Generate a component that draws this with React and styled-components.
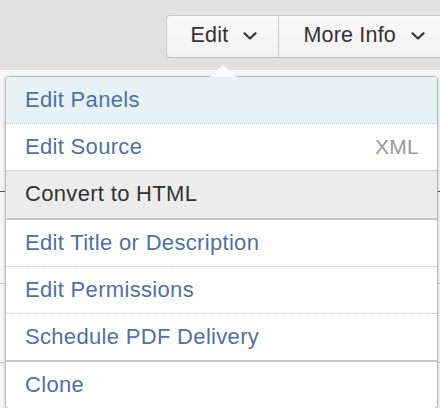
import React from "react";
import styled, { createGlobalStyle } from "styled-components";

const Global = createGlobalStyle`
  html, body { margin: 0; padding: 0; }
  body {
    width: 440px;
    height: 408px;
    overflow: hidden;
    background: #f8f8f8;
    font-family: "Liberation Sans", Helvetica, Arial, sans-serif;
  }
`;

const Page = styled.div`
  position: relative;
  width: 440px;
  height: 408px;
  overflow: hidden;
`;

const Header = styled.div`
  height: 70px;
  background: #e1e1e1;
  display: flex;
  justify-content: flex-end;
  align-items: flex-start;
  padding-top: 15px;
  box-sizing: border-box;
`;

const ButtonGroup = styled.div`
  display: flex;
  margin-right: -7px;
`;

const Button = styled.button`
  display: flex;
  align-items: center;
  gap: 15px;
  height: 43px;
  box-sizing: border-box;
  padding: 0 21px 2px 24px;
  margin: 0;
  background: linear-gradient(#f9f9f9, #f2f2f2);
  border: 1px solid #c9c9c9;
  border-bottom-color: #bdbdbd;
  border-left-width: ${(p) => (p.$first ? "1px" : "0")};
  border-radius: ${(p) => (p.$first ? "4px 0 0 4px" : "0")};
  font-family: inherit;
  font-size: 21.5px;
  letter-spacing: 0.2px;
  color: #333;
  cursor: pointer;
`;

const Chevron = () => (
  <svg width="14" height="8" viewBox="0 0 14 8">
    <polyline
      points="1.5,1.3 7,6.5 12.5,1.3"
      fill="none"
      stroke="#333"
      strokeWidth="2.2"
      strokeLinecap="round"
      strokeLinejoin="round"
    />
  </svg>
);

const Content = styled.div`
  display: flex;
  flex-direction: column;
`;

const TableLine = styled.div`
  height: ${(p) => p.$h}px;
  border-bottom: 1px solid ${(p) => p.$color};
`;

const Menu = styled.div`
  position: absolute;
  left: 5px;
  top: 76px;
  width: 433px;
  box-sizing: border-box;
  background: #fff;
  border: 1px solid #b9b9b9;
  border-radius: 4px;
  box-shadow: 0 1px 5px rgba(0, 0, 0, 0.18);

  &::before {
    content: "";
    position: absolute;
    left: 203px;
    top: -12px;
    border-left: 14px solid transparent;
    border-right: 14px solid transparent;
    border-bottom: 12px solid #f9fcfd;
  }
`;

const Item = styled.div`
  display: flex;
  align-items: center;
  justify-content: space-between;
  height: 46.2px;
  padding: 0 18px 0 19px;
  font-size: 22px;
  letter-spacing: 0.32px;
  color: ${(p) => (p.$plain ? "#333" : "#4f71a6")};
  background: ${(p) =>
    p.$active ? "#e7f2f5" : p.$plain ? "#ececec" : "transparent"};
  border-top: ${(p) =>
    p.$sep === "solid"
      ? "2px solid #c6c6c6"
      : p.$sep === "dotted"
      ? "1px dotted #bdbdbd"
      : "none"};
  border-radius: ${(p) => (p.$active ? "3px 3px 0 0" : "0")};
`;

const Hint = styled.span`
  color: #999;
  font-size: 21px;
  letter-spacing: 0.3px;
`;

const items = [
  { label: "Edit Panels", active: true },
  { label: "Edit Source", hint: "XML", sep: "dotted" },
  { label: "Convert to HTML", plain: true, sep: "dotted" },
  { label: "Edit Title or Description", sep: "solid" },
  { label: "Edit Permissions", sep: "dotted" },
  { label: "Schedule PDF Delivery", sep: "dotted" },
  { label: "Clone", sep: "solid" },
];

export default function App() {
  return (
    <Page>
      <Global />
      <Header>
        <ButtonGroup>
          <Button $first>
            Edit <Chevron />
          </Button>
          <Button>
            More Info <Chevron />
          </Button>
        </ButtonGroup>
      </Header>
      <Content>
        <TableLine $h={121} $color="#555" />
        <TableLine $h={91} $color="#cfcfcf" />
        <TableLine $h={78} $color="#cfcfcf" />
      </Content>
      <Menu>
        {items.map((it) => (
          <Item
            key={it.label}
            $active={it.active}
            $plain={it.plain}
            $sep={it.sep}
          >
            <span>{it.label}</span>
            {it.hint && <Hint>{it.hint}</Hint>}
          </Item>
        ))}
      </Menu>
    </Page>
  );
}
